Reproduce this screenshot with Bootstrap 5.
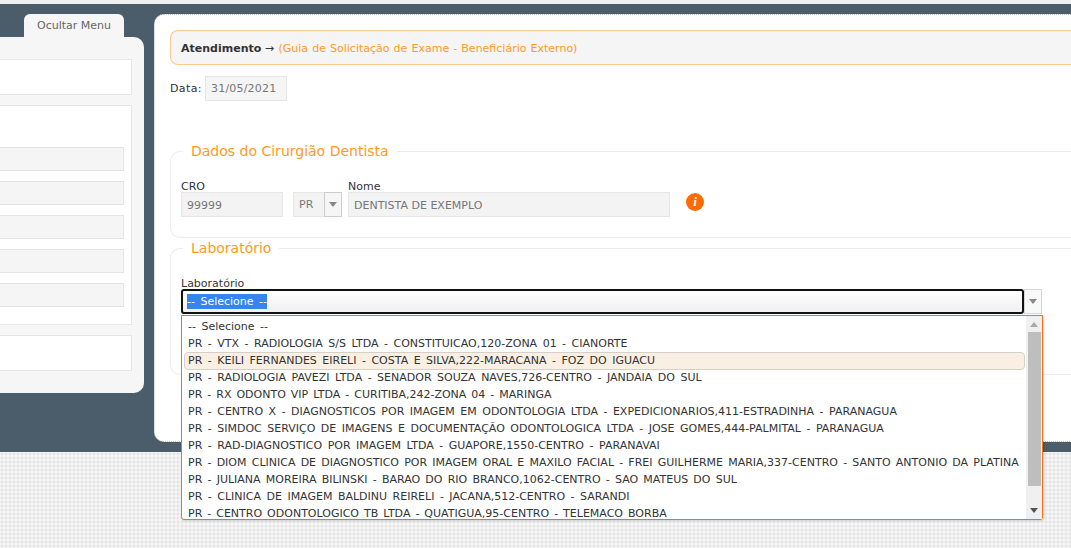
<!DOCTYPE html>
<html lang="pt-BR">
<head>
  <meta charset="UTF-8">
  <meta name="viewport" content="width=device-width, initial-scale=1.0">
  <title>Atendimento</title>
  <link rel="stylesheet" href="https://cdn.jsdelivr.net/npm/bootstrap@5.3.0/dist/css/bootstrap.min.css">
  <style>
    html, body { height: 548px; overflow: hidden; }
    body {
      font-family: "DejaVu Sans", Verdana, sans-serif;
      font-size: 11px;
      line-height: 14px;
      color: #333;
      background-color: #efefef;
      background-image: radial-gradient(#e5e5e5 1px, transparent 1px), radial-gradient(#f6f6f6 1px, transparent 1px);
      background-size: 4px 4px;
      background-position: 0 0, 2px 2px;
    }
    .top-strip { height: 4px; background: #efefef; }
    .page-band { height: 448px; background: #4b5d6b; padding: 10px 0 0 0; }
    .side-col { width: 144px; flex: none; margin-right: 10px; }
    .hide-tab {
      width: 100px; height: 23px; margin-left: 24px;
      background: #f6f6f6; border-radius: 6px 6px 0 0;
      color: #666; text-align: center; line-height: 24px;
    }
    .side-panel { height: 356px; background: #f6f6f6; border-radius: 0 10px 10px 0; padding: 22px 12px 0 0; }
    .side-box { background: #fff; border: 1px solid #e6e6e6; border-left: 0; }
    .side-box.one { height: 36px; margin-bottom: 10px; }
    .side-box.two { height: 220px; margin-bottom: 10px; padding: 41px 7px 0 0; }
    .side-input { height: 24px; background: #f5f5f5; border: 1px solid #e4e4e4; border-left: 0; margin-bottom: 10px; }
    .main-panel {
      width: 960px; flex: none; height: 428px;
      background: #fff; border: 1px dotted #c4c4c4; border-right: 0;
      border-radius: 10px 0 0 10px; padding: 15px 0 0 15px;
    }
    .title-box {
      height: 35px; background: #f5f5f5; border: 1px solid #fbc98e; border-right: 0;
      border-radius: 8px 0 0 8px; padding: 11px 10px 0; font-size: 11px; line-height: 14px;
    }
    .title-box b { color: #333; }
    .title-box span { color: #ff9a1f; word-spacing: .6px; margin-left: 1px; }
    .date-row { margin-top: 11px; height: 25px; }
    .date-row label { letter-spacing: .4px; }
    .date-field {
      width: 82px; height: 25px; margin-left: 3px; background: #f5f5f5; border: 1px solid #e6e6e6;
      color: #777; padding: 5px 5px; letter-spacing: .2px;
    }
    .group-box {
      border: 1px solid #ececec; border-right: 0; border-radius: 10px 0 0 10px;
      margin: 0; padding: 0 0 0 10px; min-width: 0;
    }
    .group-box legend {
      float: none; width: auto; margin: 0 0 0 2px; padding: 0 8px;
      font-size: 14px; line-height: 18px; color: #ff9a1f;
    }
    .group-box.dentist { height: 96px; margin-top: 41px; }
    .group-box.lab { height: 136px; margin-top: 1px; position: relative; }
    .field-label { display: block; line-height: 12px; margin-bottom: -1px; color: #333; }
    .fields-row { margin-top: 21px; }
    .cro-field, .name-field, .uf-field {
      height: 25px; background: #f3f3f3; border: 1px solid #e6e6e6; color: #777; padding: 6px 5px 0;
    }
    .cro-field { width: 102px; margin-right: 10px; }
    .uf-field { width: 49px; margin-right: 6px; padding: 1px 0 0 5px; display: flex; align-items: center; justify-content: space-between; }
    .name-field { width: 322px; }
    .uf-arrow { width: 18px; height: 25px; margin-top: -2px; border: 1px solid #ccc; margin-right: -1px; background: #f6f6f6; display: flex; align-items: center; justify-content: center; }
    .tri-down { width: 0; height: 0; border: 4px solid transparent; border-top: 5px solid #888; border-bottom: 0; }
    .tri-up { width: 0; height: 0; border: 4px solid transparent; border-bottom: 5px solid #aaa; border-top: 0; }
    .info-dot {
      width: 18px; height: 18px; margin: 0 0 6px 16px; border-radius: 50%; background: #ff6a00; color: #fff;
      font: italic bold 13px/18px "Liberation Serif", serif; text-align: center; align-self: flex-end;
    }
    .lab-label { margin-top: 21px; }
    .lab-row { width: 861px; height: 25px; }
    .lab-select {
      width: 844px; height: 25px; border: 2px solid #111; border-radius: 3px;
      background: linear-gradient(#fff, #f0f0f0); padding: 3px 4px; color: #fff; line-height: 15px; word-spacing: 2px;
    }
    .lab-select span { background: #3584f0; display: inline-block; }
    .lab-arrow { width: 18px; height: 25px; border: 1px solid #d6d6d6; background: #f8f8f8; display: flex; align-items: center; justify-content: center; }
    .lab-menu {
      position: absolute; left: 10px; top: 58px; width: 862px; height: 205px; z-index: 5;
      background: #fff; border: 1px solid #ef7215; border-radius: 0 0 3px 3px; display: flex;
      box-shadow: 1px 1px 2px rgba(0,0,0,.15);
    }
    .lab-list { flex: 1; overflow: hidden; padding: 2px 2px 0 2px; word-spacing: 2px; }
    .lab-item { height: 17px; line-height: 17px; padding-left: 4px; color: #333; white-space: nowrap; }
    .lab-item.ws-tight { word-spacing: 1.7px; }
    .lab-item.ws-tighter { word-spacing: 1.5px; }
    .lab-item.hover { background: #f9f0e3; border: 1px solid #d5d0c9; border-radius: 4px; line-height: 16px; padding-left: 3px; width: 841px; height: 18px; margin-bottom: -1px; }
    .lab-scroll { width: 16px; background: #f0f0f0; display: flex; flex-direction: column; align-items: center; padding-top: 6px; }
    .lab-thumb { width: 13px; height: 154px; background: #bebebe; margin-top: 5px; }
    .lab-scroll .tri-end { margin-top: auto; margin-bottom: 6px; border-top-color: #555; }
  </style>
</head>
<body>
  <div class="top-strip"></div>
  <div class="page-band d-flex">
    <aside class="side-col">
      <div class="hide-tab">Ocultar Menu</div>
      <div class="side-panel">
        <div class="side-box one"></div>
        <div class="side-box two">
          <div class="side-input"></div>
          <div class="side-input"></div>
          <div class="side-input"></div>
          <div class="side-input"></div>
          <div class="side-input"></div>
        </div>
        <div class="side-box one"></div>
      </div>
    </aside>
    <main class="main-panel">
      <div class="title-box"><b>Atendimento</b> → <span>(Guia de Solicitação de Exame - Beneficiário Externo)</span></div>
      <div class="date-row d-flex align-items-center">
        <label class="mb-0">Data:</label>
        <div class="date-field">31/05/2021</div>
      </div>
      <fieldset class="group-box dentist">
        <legend>Dados do Cirurgião Dentista</legend>
        <div class="d-flex fields-row">
          <div>
            <label class="field-label">CRO</label>
            <div class="cro-field">99999</div>
          </div>
          <div>
            <label class="field-label">&nbsp;</label>
            <div class="uf-field">PR<span class="uf-arrow"><i class="tri-down"></i></span></div>
          </div>
          <div>
            <label class="field-label">Nome</label>
            <div class="name-field">DENTISTA DE EXEMPLO</div>
          </div>
          <div class="info-dot">i</div>
        </div>
      </fieldset>
      <fieldset class="group-box lab">
        <legend>Laboratório</legend>
        <label class="field-label lab-label">Laboratório</label>
        <div class="lab-row d-flex">
          <div class="lab-select"><span>-- Selecione --</span></div>
          <div class="lab-arrow"><i class="tri-down"></i></div>
        </div>
        <div class="lab-menu">
          <div class="lab-list">
            <div class="lab-item">-- Selecione --</div>
            <div class="lab-item">PR - VTX - RADIOLOGIA S/S LTDA - CONSTITUICAO,120-ZONA 01 - CIANORTE</div>
            <div class="lab-item hover">PR - KEILI FERNANDES EIRELI - COSTA E SILVA,222-MARACANA - FOZ DO IGUACU</div>
            <div class="lab-item">PR - RADIOLOGIA PAVEZI LTDA - SENADOR SOUZA NAVES,726-CENTRO - JANDAIA DO SUL</div>
            <div class="lab-item ws-tighter">PR - RX ODONTO VIP LTDA - CURITIBA,242-ZONA 04 - MARINGA</div>
            <div class="lab-item">PR - CENTRO X - DIAGNOSTICOS POR IMAGEM EM ODONTOLOGIA LTDA - EXPEDICIONARIOS,411-ESTRADINHA - PARANAGUA</div>
            <div class="lab-item">PR - SIMDOC SERVIÇO DE IMAGENS E DOCUMENTAÇÃO ODONTOLOGICA LTDA - JOSE GOMES,444-PALMITAL - PARANAGUA</div>
            <div class="lab-item">PR - RAD-DIAGNOSTICO POR IMAGEM LTDA - GUAPORE,1550-CENTRO - PARANAVAI</div>
            <div class="lab-item ws-tight">PR - DIOM CLINICA DE DIAGNOSTICO POR IMAGEM ORAL E MAXILO FACIAL - FREI GUILHERME MARIA,337-CENTRO - SANTO ANTONIO DA PLATINA</div>
            <div class="lab-item ws-tight">PR - JULIANA MOREIRA BILINSKI - BARAO DO RIO BRANCO,1062-CENTRO - SAO MATEUS DO SUL</div>
            <div class="lab-item">PR - CLINICA DE IMAGEM BALDINU REIRELI - JACANA,512-CENTRO - SARANDI</div>
            <div class="lab-item ws-tighter">PR - CENTRO ODONTOLOGICO TB LTDA - QUATIGUA,95-CENTRO - TELEMACO BORBA</div>
          </div>
          <div class="lab-scroll">
            <i class="tri-up"></i>
            <div class="lab-thumb"></div>
            <i class="tri-down tri-end"></i>
          </div>
        </div>
      </fieldset>
    </main>
  </div>
  <script src="https://cdn.jsdelivr.net/npm/bootstrap@5.3.0/dist/js/bootstrap.bundle.min.js"></script>
</body>
</html>
